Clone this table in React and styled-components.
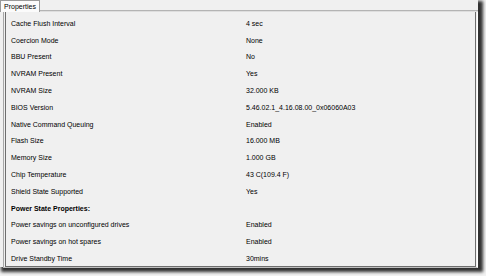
import styled, { createGlobalStyle } from "styled-components"

const GlobalStyle = createGlobalStyle`
  html, body {
    margin: 0;
    padding: 0;
    background: #f2f2f2;
  }
  body {
    font-family: "Liberation Sans", Arial, sans-serif;
  }
`

const properties = [
  { name: "Cache Flush Interval", value: "4 sec" },
  { name: "Coercion Mode", value: "None" },
  { name: "BBU Present", value: "No" },
  { name: "NVRAM Present", value: "Yes" },
  { name: "NVRAM Size", value: "32.000 KB" },
  { name: "BIOS Version", value: "5.46.02.1_4.16.08.00_0x06060A03" },
  { name: "Native Command Queuing", value: "Enabled" },
  { name: "Flash Size", value: "16.000 MB" },
  { name: "Memory Size", value: "1.000 GB" },
  { name: "Chip Temperature", value: "43 C(109.4 F)" },
  { name: "Shield State Supported", value: "Yes" },
  { name: "Power State Properties:", heading: true },
  { name: "Power savings on unconfigured drives", value: "Enabled" },
  { name: "Power savings on hot spares", value: "Enabled" },
  { name: "Drive Standby Time", value: "30mins" },
]

const App = () => {
  return (
    <>
      <GlobalStyle />
      <Screen>
        <Window>
          <TabStrip>
            <Tab>Properties</Tab>
            <TabRule />
          </TabStrip>
          <Panel>
            {properties.map((p) => (
              <Row key={p.name}>
                <Name $heading={p.heading}>{p.name}</Name>
                <Value>{p.value}</Value>
              </Row>
            ))}
          </Panel>
        </Window>
      </Screen>
    </>
  )
}

const Screen = styled.div`
  width: 486px;
  height: 276px;
  overflow: hidden;
  background: #f2f2f2;
`

const Window = styled.div`
  width: 478px;
  height: 267px;
  display: flex;
  flex-direction: column;
  background: #f0f0f0;
  box-shadow: 3px 3px 3px 2px rgba(0, 0, 0, 0.8);
`

const TabStrip = styled.div`
  display: flex;
  align-items: flex-end;
  height: 12px;
  flex-shrink: 0;
`

const Tab = styled.div`
  box-sizing: border-box;
  height: 12px;
  padding: 0 3px;
  border: 1px solid #9a9a9a;
  border-bottom: none;
  background: #fbfbfb;
  font-size: 7px;
  line-height: 11px;
  color: #000;
`

const TabRule = styled.div`
  flex: 1;
  height: 2px;
  border-top: 1px solid #b4b4b4;
  border-bottom: 1px solid #dedede;
  box-sizing: border-box;
`

const Panel = styled.div`
  flex: 1;
  margin: 0 0 2px 3px;
  border-left: 1px solid #a8a8a8;
  border-right: 1px solid #fff;
  border-bottom: 1px solid #bdbdbd;
  display: flex;
  flex-direction: column;
  padding: 3px 0 0 0;
  position: relative;
  box-sizing: border-box;

  &::before {
    content: "";
    position: absolute;
    left: 1px;
    top: 0;
    bottom: 0;
    right: 1px;
    border-left: 1px solid #6e6e6e;
    border-right: 1px solid #6e6e6e;
    border-bottom: 1px solid #6e6e6e;
    pointer-events: none;
  }
`

const Row = styled.div`
  display: grid;
  grid-template-columns: 235px 1fr;
  height: 16.8px;
  align-items: center;
  padding-left: 7px;
  font-size: 7px;
  color: #000;
`

const Name = styled.span`
  font-weight: ${({ $heading }) => ($heading ? 700 : 400)};
  white-space: nowrap;
`

const Value = styled.span`
  white-space: nowrap;
`

export default App
